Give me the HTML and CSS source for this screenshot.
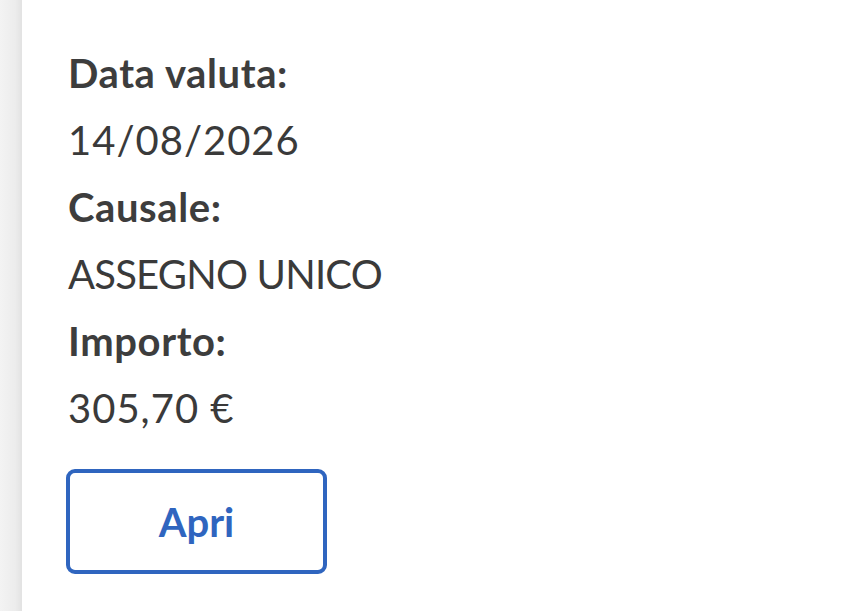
FILE: index.html
```html
<!DOCTYPE html>
<html lang="it">
<head>
<meta charset="utf-8">
<title>Movimento</title>
<link rel="stylesheet" href="styles.css">
</head>
<body>
<div class="page">
  <div class="edge"></div>
  <div class="card">
    <dl class="details">
      <dt>Data valuta:</dt>
      <dd class="num">14/08/2026</dd>
      <dt>Causale:</dt>
      <dd class="caps">ASSEGNO UNICO</dd>
      <dt>Importo:</dt>
      <dd class="num">305,70 €</dd>
    </dl>
    <button class="btn" type="button">Apri</button>
  </div>
</div>
</body>
</html>
```
FILE: styles.css
```css
html, body {
  margin: 0;
  padding: 0;
  background: #ffffff;
}
.page {
  display: flex;
  width: 868px;
  height: 611px;
  overflow: hidden;
}
.edge {
  flex: 0 0 22px;
  background: linear-gradient(to right, #f3f3f3 0%, #ececec 70%, #e2e2e2 100%);
}
.card {
  flex: 1;
  background: #ffffff;
  padding: 40px 0 0 46px;
  font-family: Lato, "Open Sans", sans-serif;
  color: #3a3a3a;
}
.details {
  margin: 0;
  font-size: 40px;
  line-height: 67px;
}
.details dt {
  font-weight: 700;
  color: #3d3d3d;
  letter-spacing: 0.6px;
}
.details dd {
  margin: 0;
  font-weight: 400;
  color: #3a3a3a;
}
.details .num {
  letter-spacing: 1px;
}
.details .caps {
  letter-spacing: -0.8px;
}
.btn {
  display: flex;
  align-items: center;
  justify-content: center;
  margin: 27px 0 0 -2px;
  width: 261px;
  height: 105px;
  box-sizing: border-box;
  border: 4px solid #2f65bf;
  border-radius: 9px;
  background: #ffffff;
  color: #2f65bf;
  font-family: Lato, "Open Sans", sans-serif;
  font-weight: 700;
  font-size: 40px;
  padding: 0;
}
```
